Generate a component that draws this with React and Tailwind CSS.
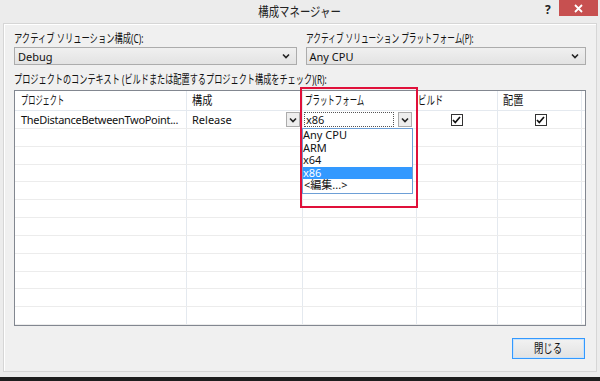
import React from "react";

const font = { fontFamily: '"Noto Sans", "Noto Sans CJK JP", sans-serif' };

function J({ children, className = "" }) {
  return <span className={`inline-block whitespace-nowrap ${className}`}>{children}</span>;
}

function Chevron() {
  return (
    <svg width="8" height="6" viewBox="0 0 8 6">
      <path d="M1 1.5 L4 4.5 L7 1.5" fill="none" stroke="#222" strokeWidth="1.6" />
    </svg>
  );
}

function Select({ value }) {
  return (
    <div className="flex h-[18px] items-center justify-between border border-[#acacac] bg-gradient-to-b from-[#f0f0f0] to-[#e3e3e3] pl-[3px] pr-[6px]">
      <span className="text-[11px] leading-none text-[#111]">{value}</span>
      <Chevron />
    </div>
  );
}

function Check() {
  return (
    <div className="flex h-[12px] w-[12px] items-center justify-center border border-[#333] bg-white">
      <svg width="9" height="8" viewBox="0 0 9 8">
        <path d="M1 4 L3.3 6.5 L8 1" fill="none" stroke="#111" strokeWidth="1.7" />
      </svg>
    </div>
  );
}

const cols = "grid grid-cols-[172px_116px_114px_81px_84px_1fr]";

function EmptyRow() {
  return (
    <div className={`${cols} h-[18px] border-b border-[#ececec]`}>
      <div className="border-r border-[#e4e9ef]" />
      <div className="border-r border-[#e4e9ef]" />
      <div className="border-r border-[#e4e9ef]" />
      <div className="border-r border-[#e4e9ef]" />
      <div className="border-r border-[#e4e9ef]" />
      <div />
    </div>
  );
}

export default function App() {
  return (
    <div className="relative flex h-[381px] w-[600px] flex-col overflow-hidden bg-[#ececec] text-[#111]" style={font}>
      {/* title bar */}
      <div className="relative flex h-[23px] items-center justify-center">
        <J className="origin-center scale-x-[0.8] text-[13px] text-[#222]">構成マネージャー</J>
        <span className="absolute left-[545px] top-[1px] text-[12px] font-bold text-[#222]">?</span>
        <div className="absolute right-[2px] top-0 flex h-[16px] w-[39px] items-center justify-center bg-[#c75050]">
          <svg width="9" height="9" viewBox="0 0 9 9">
            <path d="M1 1 L8 8 M8 1 L1 8" stroke="white" strokeWidth="1.8" />
          </svg>
        </div>
      </div>
      {/* frame */}
      <div className="mx-[3px] flex h-[349px] flex-col border border-[#d6d6d6] bg-[#f0f0f0] shadow-[inset_1px_1px_0_#ffffff]">
        <div className="flex flex-col px-[10px] pt-[6px]">
          <div className="flex gap-[9px]">
            <div className="flex w-[283px] flex-col">
              <div className="h-[17px] text-[12px] leading-[17px]">
                <J className="origin-left scale-x-[0.69]">アクティブ ソリューション構成(C):</J>
              </div>
              <Select value="Debug" />
            </div>
            <div className="flex w-[281px] flex-col">
              <div className="h-[17px] text-[12px] leading-[17px]">
                <J className="origin-left scale-x-[0.64]">アクティブ ソリューション プラットフォーム(P):</J>
              </div>
              <Select value="Any CPU" />
            </div>
          </div>
          <div className="mt-[6px] h-[17px] text-[12px] leading-[17px]">
            <J className="origin-left scale-x-[0.68]">
              プロジェクトのコンテキスト (ビルドまたは配置するプロジェクト構成をチェック)(R):
            </J>
          </div>
          {/* table */}
          <div className="mt-[2px] flex h-[236px] w-[572px] flex-col overflow-hidden border border-[#828790] bg-white">
            <div className={`${cols} h-[20px] border-b border-[#e4e9ef] text-[12px] leading-[19px]`}>
              <div className="border-r border-[#e4e9ef] pl-[6px]">
                <J className="origin-left scale-x-[0.6]">プロジェクト</J>
              </div>
              <div className="border-r border-[#e4e9ef] pl-[5px]">
                <J className="origin-left scale-x-[0.85]">構成</J>
              </div>
              <div className="border-r border-[#e4e9ef] pl-[2px]">
                <J className="origin-left scale-x-[0.62]">プラットフォーム</J>
              </div>
              <div className="border-r border-[#e4e9ef] pl-[1px]">
                <J className="origin-left scale-x-[0.7]">ビルド</J>
              </div>
              <div className="border-r border-[#e4e9ef] pl-[5px]">
                <J className="origin-left scale-x-[0.85]">配置</J>
              </div>
              <div />
            </div>
            <div className={`${cols} h-[18px] border-b border-[#ececec] text-[11px] leading-[17px]`}>
              <div className="overflow-hidden whitespace-nowrap border-r border-[#e4e9ef] pl-[6px] tracking-[-0.3px]">
                TheDistanceBetweenTwoPoint...
              </div>
              <div className="flex items-center justify-between border-r border-[#e4e9ef] pl-[5px] pr-[2px]">
                <span>Release</span>
                <div className="flex h-[15px] w-[14px] items-center justify-center border border-[#acacac] bg-[#eeeeee]">
                  <Chevron />
                </div>
              </div>
              <div className="flex items-center justify-between border-r border-[#e4e9ef] pl-[1px] pr-[4px]">
                <div className="flex h-[15px] w-[90px] items-center border border-dotted border-[#555] pl-[1px]">x86</div>
                <div className="flex h-[15px] w-[14px] items-center justify-center border border-[#acacac] bg-[#eeeeee]">
                  <Chevron />
                </div>
              </div>
              <div className="flex items-center justify-center border-r border-[#e4e9ef] pr-[1px]">
                <Check />
              </div>
              <div className="flex items-center justify-center border-r border-[#e4e9ef] pl-[2px]">
                <Check />
              </div>
              <div />
            </div>
            {Array.from({ length: 11 }).map((_, i) => (
              <EmptyRow key={i} />
            ))}
          </div>
          <div className="mt-[12px] flex justify-end pr-[1px]">
            <div className="flex h-[21px] w-[73px] items-center justify-center border border-[#3399ff] bg-gradient-to-b from-[#f2f2f2] to-[#e2e2e2] text-[12px] shadow-[inset_0_0_0_1px_#c9e2fa]">
              <J className="origin-center scale-x-[0.78]">閉じる</J>
            </div>
          </div>
        </div>
      </div>
      <div className="flex-1" />
      <div className="h-[4px] bg-[#1e1e1e]" />

      {/* dropdown list overlay */}
      <div className="absolute left-[302px] top-[128px] flex h-[66px] w-[111px] flex-col border border-[#6d9fd6] bg-white text-[11px] leading-[12.6px]">
        <div className="h-[12.6px]">Any CPU</div>
        <div className="h-[12.6px]">ARM</div>
        <div className="h-[12.6px]">x64</div>
        <div className="h-[12.6px] bg-[#3399ff] text-white">x86</div>
        <div className="h-[12.6px] pl-[1px]">&lt;編集...&gt;</div>
      </div>
      {/* red highlight */}
      <div className="pointer-events-none absolute left-[300px] top-[87px] h-[121px] w-[118px] border-2 border-[#e0103a]" />
    </div>
  );
}
